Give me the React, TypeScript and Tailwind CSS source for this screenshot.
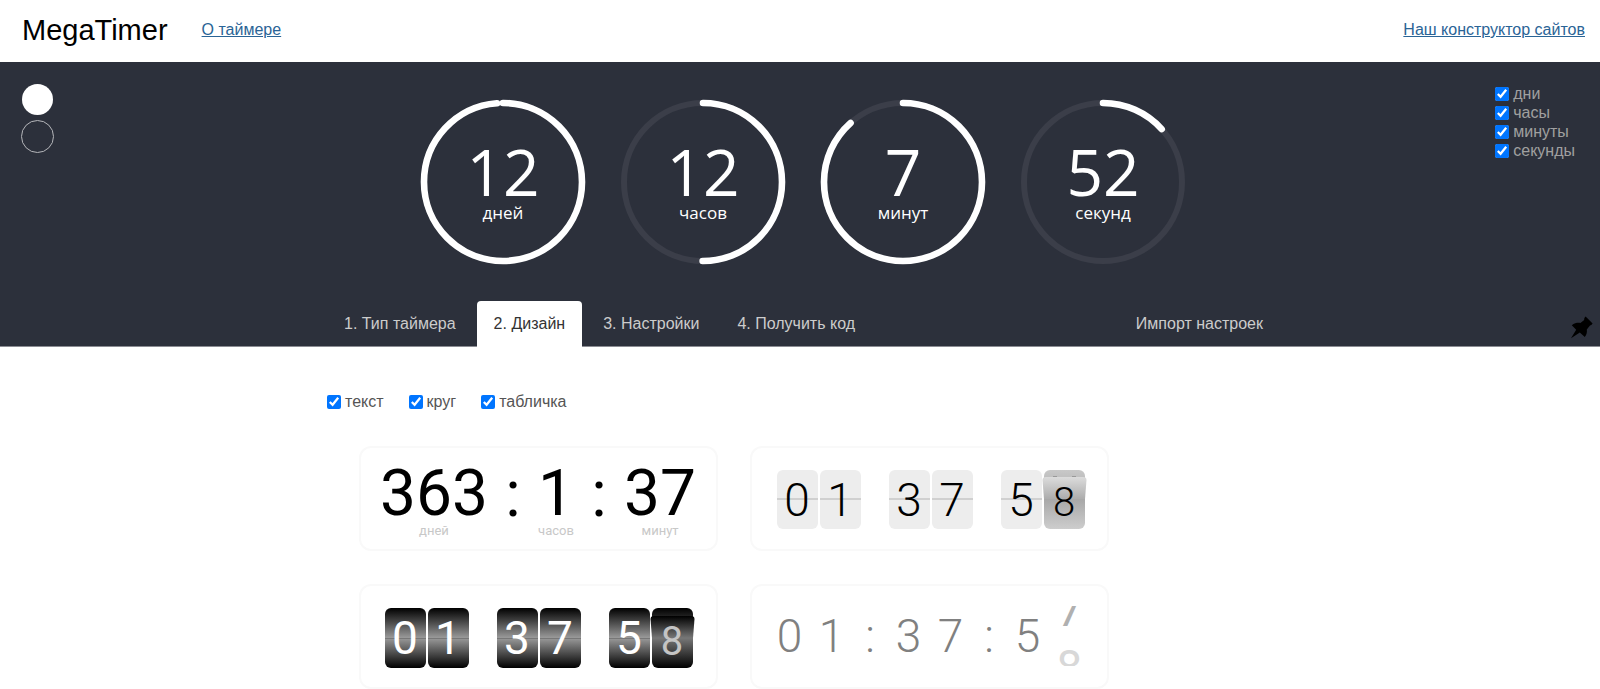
import { useState } from "react";

const rings = [
    { value: "12", label: "дней", part: 0.986 },
    { value: "12", label: "часов", part: 0.5 },
    { value: "7", label: "минут", part: 0.883 },
    { value: "52", label: "секунд", part: 0.133 },
];

const units = ["дни", "часы", "минуты", "секунды"];

const tabs = ["1. Тип таймера", "2. Дизайн", "3. Настройки", "4. Получить код"];

const kinds = ["текст", "круг", "табличка"];

const RADIUS = 79;
const LENGTH = 2 * Math.PI * RADIUS;

function Ring({ value, label, part }: { value: string; label: string; part: number }) {
    return (
        <div className="relative size-[166px]">
            <svg viewBox="0 0 166 166" className="absolute inset-0 size-full" fill="none">
                <circle cx="83" cy="83" r={RADIUS} stroke="#3b3e49" strokeWidth="6" />
                <circle
                    cx="83"
                    cy="83"
                    r={RADIUS}
                    stroke="#fff"
                    strokeWidth="6.6"
                    strokeLinecap="round"
                    strokeDasharray={`${LENGTH * part} ${LENGTH}`}
                    transform="rotate(-90 83 83)"
                />
            </svg>
            <div className="relative flex flex-col items-center pt-[41px] font-['Open_Sans',sans-serif] text-white">
                <span className="text-[64px] leading-[64px]">{value}</span>
                <span className="text-[17px] leading-[18px]">{label}</span>
            </div>
        </div>
    )
}

function Check({ id, label, className }: { id: string; label: string; className: string }) {
    const [checked, setChecked] = useState(true)

    return (
        <label htmlFor={id} className={className}>
            <input
                id={id}
                type="checkbox"
                className="size-[14px] accent-[#0075ff]"
                checked={checked}
                onChange={(e) => setChecked(e.target.checked)}
            />
            {label}
        </label>
    )
}

function TextPreview() {
    return (
        <div className="flex justify-between pt-[15px] pr-5 pl-[19px] text-black">
            <PreviewUnit value="363" label="дней" />
            <span className="text-[64px] leading-[64px]">:</span>
            <PreviewUnit value="1" label="часов" />
            <span className="text-[64px] leading-[64px]">:</span>
            <PreviewUnit value="37" label="минут" />
        </div>
    )
}

function PreviewUnit({ value, label }: { value: string; label: string }) {
    return (
        <div className="flex flex-col items-center">
            <span className="text-[64px] leading-[62px]">{value}</span>
            <span className="text-[13px] leading-3 text-[#c8c8c8]">{label}</span>
        </div>
    )
}

function LightFlip({ digit }: { digit: string }) {
    return (
        <span className="relative flex h-[59px] w-[41px] items-center justify-center rounded-md bg-[#ededed]">
            <span className="absolute inset-x-0 top-[28px] h-[2px] bg-[#d0d0d0]" />
            <span className="relative">{digit}</span>
        </span>
    )
}

function DarkFlip({ digit }: { digit: string }) {
    return (
        <span className="relative flex h-[60px] w-[41px] items-center justify-center rounded-md bg-linear-to-b/srgb from-black via-[#9a9a9a] to-black">
            <span className="absolute inset-x-0 top-[30px] h-px bg-[#777]" />
            <span className="relative">{digit}</span>
        </span>
    )
}

function LightPreview() {
    return (
        <div className="flex h-full items-center justify-center gap-7 pt-[2px] pl-[2px] text-[46px] leading-[46px] font-light text-black">
            <div className="flex gap-[2px]"><LightFlip digit="0" /><LightFlip digit="1" /></div>
            <div className="flex gap-[2px]"><LightFlip digit="3" /><LightFlip digit="7" /></div>
            <div className="flex gap-[2px]">
                <LightFlip digit="5" />
                <span className="relative flex h-[59px] w-[41px] items-end justify-center pb-[6px]">
                    <svg viewBox="0 0 45 59" className="absolute inset-y-0 -left-[2px] h-full w-[45px]">
                        <defs>
                            <linearGradient id="flapLight" x1="0" y1="0" x2="0" y2="1">
                                <stop offset="0" stopColor="#dcdcdc" />
                                <stop offset="1" stopColor="#acacac" />
                            </linearGradient>
                            <linearGradient id="baseLight" x1="0" y1="0" x2="0" y2="1">
                                <stop offset="0" stopColor="#c8c8c8" />
                                <stop offset="0.5" stopColor="#a8a8a8" />
                                <stop offset="1" stopColor="#cdcdcd" />
                            </linearGradient>
                        </defs>
                        <rect x="2" width="41" height="59" rx="6" fill="url(#baseLight)" />
                        <path d="M0.500 10Q0.500 7 4 7H41Q44.500 7 44.500 10L43 29H2Z" fill="url(#flapLight)" />
                        <path d="M11 6.500h4M30 6.500h4" stroke="#999" />
                    </svg>
                    <span className="relative text-[40px] leading-[40px]">8</span>
                </span>
            </div>
        </div>
    )
}

function DarkPreview() {
    return (
        <div className="flex h-full items-center justify-center gap-7 pt-[2px] text-[46px] leading-[46px] text-white">
            <div className="flex gap-[2px]"><DarkFlip digit="0" /><DarkFlip digit="1" /></div>
            <div className="flex gap-[2px]"><DarkFlip digit="3" /><DarkFlip digit="7" /></div>
            <div className="flex gap-[2px]">
                <DarkFlip digit="5" />
                <span className="relative flex h-[60px] w-[41px] items-end justify-center pb-[6px]">
                    <svg viewBox="0 0 45 60" className="absolute inset-y-0 -left-[2px] h-full w-[45px]">
                        <defs>
                            <linearGradient id="flapDark" x1="0" y1="0" x2="0" y2="1">
                                <stop offset="0" stopColor="#000" />
                                <stop offset="1" stopColor="#777" />
                            </linearGradient>
                            <linearGradient id="baseDark" x1="0" y1="0" x2="0" y2="1">
                                <stop offset="0" stopColor="#000" />
                                <stop offset="0.5" stopColor="#777" />
                                <stop offset="1" stopColor="#000" />
                            </linearGradient>
                        </defs>
                        <rect x="2" width="41" height="60" rx="6" fill="url(#baseDark)" />
                        <path d="M0.500 11Q0.500 8 4 8H41Q44.500 8 44.500 11L43 30H2Z" fill="url(#flapDark)" />
                    </svg>
                    <span className="relative text-[40px] leading-[40px] text-[#c4c4c4]">8</span>
                </span>
            </div>
        </div>
    )
}

function SlidePreview() {
    return (
        <div className="flex h-full items-center justify-center pb-[2px] text-center text-[46px] leading-[46px] font-light text-[#808080]">
            <span className="w-[42px]">0</span>
            <span className="w-[42px]">1</span>
            <span className="w-[35px]">:</span>
            <span className="w-[42px]">3</span>
            <span className="w-[42px]">7</span>
            <span className="w-[35px]">:</span>
            <span className="w-[42px]">5</span>
            {/* 7 leaves through the top while 8 comes in from below */}
            <span className="flex h-[60px] w-[42px] flex-col justify-between font-normal">
                <span className="flex h-5 flex-col justify-end overflow-hidden text-[#b0b0b0]">
                    <span className="-mb-2">7</span>
                </span>
                <span className="h-[22px] overflow-hidden text-[#d8d8d8]">8</span>
            </span>
        </div>
    )
}

export default function App() {
    const [tab, setTab] = useState(1)
    const [theme, setTheme] = useState("white")

    return (
        <div className="min-h-screen bg-white font-['Liberation_Sans',Arial,sans-serif] text-base">
            <header className="flex h-[62px] items-center pr-[15px] pb-[2px] pl-[22px]">
                <h1 className="text-[29px] leading-8 text-black">MegaTimer</h1>
                <a href="#about" className="ml-[34px] text-[#2a6496] underline">О таймере</a>
                <a href="#builder" className="ml-auto text-[#2a6496] underline">Наш конструктор сайтов</a>
            </header>

            <section className="relative border-b border-[#8b8c93] bg-[#2c303b]">
                {/* Background switch */}
                <div className="absolute top-[22px] left-[21px] flex flex-col items-center gap-[5px]">
                    <button
                        type="button"
                        aria-label="Белый"
                        aria-pressed={theme === "white"}
                        onClick={() => setTheme("white")}
                        className="size-[31px] rounded-full bg-white"
                    />
                    <button
                        type="button"
                        aria-label="Тёмный"
                        aria-pressed={theme === "dark"}
                        onClick={() => setTheme("dark")}
                        className="size-[33px] rounded-full border border-[#b5b6ba]"
                    />
                </div>

                {/* Units */}
                <div className="absolute top-[22px] right-[25px] flex flex-col">
                    {units.map((unit) => (
                        <Check
                            key={unit}
                            id={unit}
                            label={unit}
                            className="flex items-center gap-1 text-base leading-[19px] text-[#a0a0a0]"
                        />
                    ))}
                </div>

                {/* Timer */}
                <div className="flex justify-center gap-[34px] pt-[37px] pl-[6px]">
                    {rings.map((ring) => (
                        <Ring key={ring.label} {...ring} />
                    ))}
                </div>

                {/* Tabs */}
                <nav className="mx-auto mt-9 flex h-[45px] w-full max-w-[960px] items-stretch pl-[7px]">
                    {tabs.map((name, i) => (
                        <button
                            key={name}
                            type="button"
                            onClick={() => setTab(i)}
                            className={
                                i === tab
                                    ? "mr-1 -mb-px rounded-t bg-white px-[17px] text-[#333]"
                                    : "mr-1 px-[17px] text-[#ccc]"
                            }
                        >
                            {name}
                        </button>
                    ))}
                    <button type="button" className="mr-[17px] ml-auto text-[#ccc]">Импорт настроек</button>
                </nav>

                <button type="button" aria-label="Закрепить" className="absolute right-[6px] bottom-[7px]">
                    <svg viewBox="0 0 24 24" className="size-6 fill-black">
                        <path d="M15.600 1.500 22.600 8.500C21.800 9.900 20.900 10.200 20 10.400L16.800 14.400C17.200 17 16.600 19.800 14.800 22L9.800 17.600 1 23.200 6.200 14.800 1.800 10.200C4.600 8 7.800 7.600 10.400 8L14.200 5C14 3.600 14.600 2.500 15.600 1.500Z" />
                    </svg>
                </button>
            </section>

            <main className="mx-auto w-full max-w-[960px] pt-[46px]">
                <div className="flex gap-[25px] pl-[7px]">
                    {kinds.map((kind) => (
                        <Check
                            key={kind}
                            id={kind}
                            label={kind}
                            className="flex items-center gap-1 text-base leading-[18px] text-[#555]"
                        />
                    ))}
                </div>

                {/* Designs */}
                <div className="mt-[35px] grid grid-cols-[359px_359px] gap-x-8 gap-y-[33px] pl-[39px] font-[Roboto,sans-serif]">
                    <div className="h-[105px] rounded-xl border-2 border-[#f9f9f9]"><TextPreview /></div>
                    <div className="h-[105px] rounded-xl border-2 border-[#f9f9f9]"><LightPreview /></div>
                    <div className="h-[105px] rounded-xl border-2 border-[#f9f9f9]"><DarkPreview /></div>
                    <div className="h-[105px] rounded-xl border-2 border-[#f9f9f9]"><SlidePreview /></div>
                </div>
            </main>
        </div>
    )
}
